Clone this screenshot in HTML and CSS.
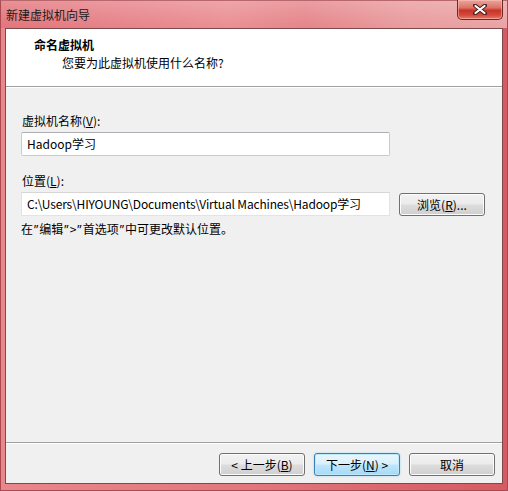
FILE: index.html
```html
<!DOCTYPE html>
<html lang="zh-CN">
<head>
<meta charset="utf-8">
<title>新建虚拟机向导</title>
<link rel="stylesheet" href="styles.css">
</head>
<body>
<div class="window">
  <div class="titlebar">
    <span class="title">新建虚拟机向导</span>
    <div class="close">
      <svg width="14" height="11" viewBox="0 0 14 11">
        <path d="M2 1.5 L12 9.5 M12 1.5 L2 9.5" stroke="#4a1f1f" stroke-width="4" stroke-linecap="round"/>
        <path d="M2.5 2 L11.5 9 M11.5 2 L2.5 9" stroke="#ffffff" stroke-width="2.2" stroke-linecap="round"/>
      </svg>
    </div>
  </div>
  <div class="client">
    <div class="header">
      <div class="h-title">命名虚拟机</div>
      <div class="h-sub">您要为此虚拟机使用什么名称?</div>
    </div>
    <div class="body">
      <div class="label">虚拟机名称(<u>V</u>):</div>
      <div class="input input-name">Hadoop学习</div>
      <div class="label label-loc">位置(<u>L</u>):</div>
      <div class="row">
        <div class="input input-path">C:\Users\HIYOUNG\Documents\Virtual Machines\Hadoop学习</div>
        <div class="btn browse">浏览(<u>R</u>)...</div>
      </div>
      <div class="note">在<span class="q">”</span>编辑<span class="q">”</span>&gt;<span class="q">”</span>首选项<span class="q">”</span>中可更改默认位置。</div>
    </div>
    <div class="footer">
      <div class="btn">&lt;&nbsp;上一步(<u>B</u>)</div>
      <div class="btn default">下一步(<u>N</u>)&nbsp;&gt;</div>
      <div class="btn">取消</div>
    </div>
  </div>
</div>
</body>
</html>
```
FILE: styles.css
```css
* { box-sizing: border-box; }
html, body { margin: 0; padding: 0; }
body {
  font-family: "Noto Sans CJK SC", "Noto Sans", sans-serif;
  font-size: 12px;
  color: #000;
}
.window {
  width: 508px;
  height: 491px;
  display: flex;
  flex-direction: column;
  background: linear-gradient(90deg, #e8878c 0%, #e2767c 50%, #d65a62 100%);
  border: 1px solid #a94a50;
  border-top-color: #b8686c;
}
.titlebar {
  height: 27px;
  display: flex;
  justify-content: space-between;
  align-items: flex-start;
  background:
    linear-gradient(180deg, rgba(255,255,255,0.2) 0%, rgba(255,255,255,0.05) 70%, rgba(255,255,255,0) 100%),
    linear-gradient(90deg, #e2757b 0%, #e7838a 25%, #ea8f93 45%, #e5858a 60%, #e99b9d 80%, #eaa3a4 100%);
}
.title {
  padding: 6px 0 0 5px;
  line-height: 16px;
  color: #1a1a1a;
}
.close {
  width: 46px;
  height: 20px;
  margin-right: 4px;
  margin-top: -1px;
  border: 1px solid #6b2a2a;
  border-top: none;
  border-radius: 0 0 5px 5px;
  background: linear-gradient(180deg, #eaa69e 0%, #dd7366 40%, #c8332a 55%, #d44a3c 80%, #e27f70 100%);
  box-shadow: inset 0 0 0 1px rgba(255,200,190,0.5);
  display: flex;
  align-items: center;
  justify-content: center;
}
.close svg { display: block; }
.client {
  flex: 1;
  margin: 0 4px 6px 4px;
  border: 1px solid #7c4a4d;
  background: #f0f0f0;
  display: flex;
  flex-direction: column;
}
.header {
  height: 58px;
  background: #fff;
  border-bottom: 1px solid #a0a0a0;
  padding: 8px 0 0 28px;
}
.h-title {
  font-weight: bold;
  line-height: 16px;
}
.h-sub {
  line-height: 16px;
  margin-top: 2px;
  padding-left: 28px;
}
.body {
  flex: 1;
  padding: 25px 0 0 15px;
  border-top: 1px solid #fff;
}
.label {
  line-height: 16px;
  padding-left: 1px;
}
.label-loc { margin-top: 17px; }
u { text-decoration: underline; text-underline-offset: 1px; }
.input {
  width: 369px;
  height: 24px;
  margin-top: 3px;
  background: #fff;
  line-height: 22px;
  padding-left: 5px;
  white-space: nowrap;
  overflow: hidden;
}
.input-name {
  border: 1px solid #c5ccd6;
  border-top-color: #abadb3;
  border-radius: 2px;
}
.input-path {
  border: 1px solid #e3e3e3;
  border-top-color: #d6d6d6;
  letter-spacing: -0.17px;
}
.row {
  display: flex;
  align-items: flex-start;
  gap: 9px;
}
.btn {
  width: 86px;
  height: 23px;
  border: 1px solid #707070;
  border-radius: 3px;
  background: linear-gradient(180deg, #f2f2f2 0%, #ebebeb 48%, #dddddd 52%, #cfcfcf 100%);
  box-shadow: inset 0 0 0 1px #fcfcfc;
  display: flex;
  align-items: center;
  justify-content: center;
  line-height: 16px;
  color: #000;
}
.browse { margin-top: 4px; }
.note {
  line-height: 16px;
  margin-top: 5px;
}
.q {
  font-family: "Noto Sans", sans-serif;
  margin: 0 1px;
}
.footer {
  height: 41px;
  border-top: 1px solid #a0a0a0;
  box-shadow: inset 0 1px 0 #fff;
  padding: 10px 7px 0 0;
  display: flex;
  justify-content: flex-end;
  gap: 9px;
}
.btn.default {
  border-color: #3c7fb1;
  background: linear-gradient(180deg, #eaf6fd 0%, #d9f0fc 48%, #bee6fd 52%, #a7d9f5 100%);
  box-shadow: inset 0 0 0 1px #bfe8fb, 0 0 2px #8ed0f5;
}
```
